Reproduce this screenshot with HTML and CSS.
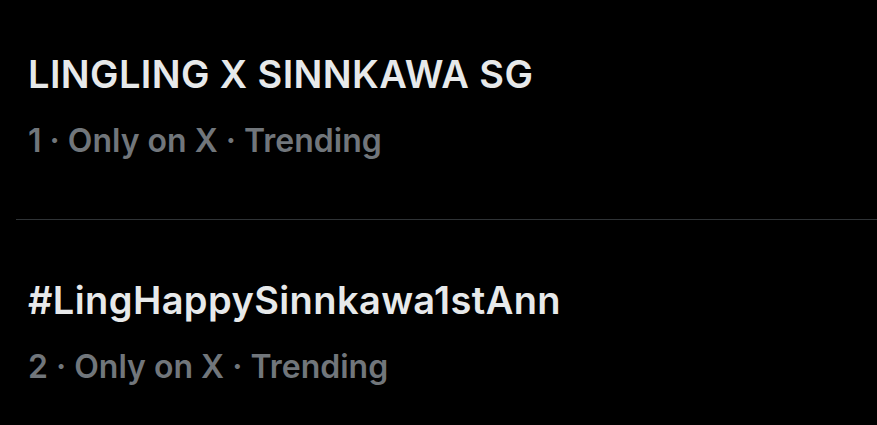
FILE: index.html
```html
<!DOCTYPE html>
<html>
<head>
<meta charset="utf-8">
<link rel="stylesheet" href="styles.css">
</head>
<body>
<div class="list">
  <div class="trend">
    <div class="title">LINGLING X SINNKAWA SG</div>
    <div class="meta">1 · Only on X · Trending</div>
  </div>
  <div class="trend">
    <div class="title">#LingHappySinnkawa1stAnn</div>
    <div class="meta">2 · Only on X · Trending</div>
  </div>
</div>
</body>
</html>
```
FILE: styles.css
```css
html, body {
  margin: 0;
  padding: 0;
  background: #000;
  height: 100%;
  overflow: hidden;
}
body {
  font-family: Inter, "Noto Sans", sans-serif;
}
.list {
  margin-top: -6px;
}
.trend {
  margin-left: 16px;
  padding: 58px 12px 58px 12px;
}
.trend + .trend {
  border-top: 1px solid #2f3336;
}
.title {
  color: #e7e9ea;
  font-size: 38px;
  font-weight: 600;
  line-height: 44px;
  letter-spacing: 0.4px;
}
.meta {
  color: #71767b;
  font-size: 32px;
  font-weight: 600;
  line-height: 40px;
  margin-top: 25px;
}
```
